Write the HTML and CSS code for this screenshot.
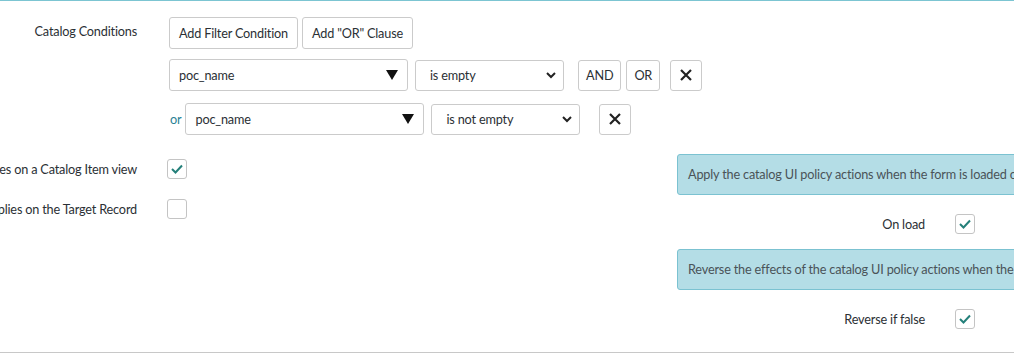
FILE: index.html
```html
<!DOCTYPE html>
<html lang="en">
<head>
    <meta charset="UTF-8">
    <title>Catalog UI Policy</title>
    <link rel="stylesheet" href="styles.css">
</head>
<body>

<div class="form">
    <!-- Conditions -->
    <div class="row conditions">
        <div class="label">Catalog Conditions</div>
        <div class="field">
            <div class="btn-row">
                <button class="btn">Add Filter Condition</button>
                <button class="btn">Add "OR" Clause</button>
            </div>
            <div class="cond">
                <div class="pick field-pick">
                    <span>poc_name</span>
                    <svg width="12" height="10" viewBox="0 0 12 10"><path d="M0 0 H12 L6 10 Z" fill="#111"/></svg>
                </div>
                <div class="pick op-pick">
                    <span>is empty</span>
                    <svg width="10" height="7" viewBox="0 0 10 7"><path d="M1 1 L5 5 L9 1" fill="none" stroke="#222" stroke-width="2"/></svg>
                </div>
                <button class="btn small and">AND</button>
                <button class="btn small">OR</button>
                <button class="btn icon">
                    <svg width="14" height="14" viewBox="0 0 14 14"><path d="M2 2 L12 12 M12 2 L2 12" stroke="#222" stroke-width="2.2"/></svg>
                </button>
            </div>
            <div class="cond">
                <span class="or">or</span>
                <div class="pick field-pick">
                    <span>poc_name</span>
                    <svg width="12" height="10" viewBox="0 0 12 10"><path d="M0 0 H12 L6 10 Z" fill="#111"/></svg>
                </div>
                <div class="pick op-pick">
                    <span>is not empty</span>
                    <svg width="10" height="7" viewBox="0 0 10 7"><path d="M1 1 L5 5 L9 1" fill="none" stroke="#222" stroke-width="2"/></svg>
                </div>
                <button class="btn icon del2">
                    <svg width="14" height="14" viewBox="0 0 14 14"><path d="M2 2 L12 12 M12 2 L2 12" stroke="#222" stroke-width="2.2"/></svg>
                </button>
            </div>
        </div>
    </div>

    <!-- Options -->
    <div class="split">
        <div class="col-left">
            <div class="row check-row">
                <div class="label">Applies on a Catalog Item view</div>
                <div class="field">
                    <span class="checkbox checked">
                        <svg width="14" height="12" viewBox="0 0 14 12"><path d="M2 6 L5.5 9.5 L12 2.5" fill="none" stroke="#24807a" stroke-width="2"/></svg>
                    </span>
                </div>
            </div>
            <div class="row check-row">
                <div class="label">Applies on the Target Record</div>
                <div class="field">
                    <span class="checkbox"></span>
                </div>
            </div>
        </div>

        <div class="col-right">
            <div class="info">Apply the catalog UI policy actions when the form is loaded or when the field values change</div>
            <div class="row right-row load-row">
                <div class="label">On load</div>
                <div class="field">
                    <span class="checkbox checked">
                        <svg width="14" height="12" viewBox="0 0 14 12"><path d="M2 6 L5.5 9.5 L12 2.5" fill="none" stroke="#24807a" stroke-width="2"/></svg>
                    </span>
                </div>
            </div>
            <div class="info">Reverse the effects of the catalog UI policy actions when the conditions evaluate to false</div>
            <div class="row right-row reverse-row">
                <div class="label">Reverse if false</div>
                <div class="field">
                    <span class="checkbox checked">
                        <svg width="14" height="12" viewBox="0 0 14 12"><path d="M2 6 L5.5 9.5 L12 2.5" fill="none" stroke="#24807a" stroke-width="2"/></svg>
                    </span>
                </div>
            </div>
        </div>
    </div>
</div>

</body>
</html>
```

FILE: styles.css
```css
body {
    font-family: "Source Sans Pro", Lato, "Liberation Sans", sans-serif;
    font-size: 12.7px;
    letter-spacing: -0.18px;
    color: #2b3035;
    background-color: white;
    margin: 0;
    padding: 0;
    overflow: hidden;
}

.form {
    border-top: 1px solid #7cc5d2;
    border-bottom: 1px solid #c8c8c8;
    height: 353px;
    box-sizing: border-box;
    width: 1014px;
    overflow: hidden;
}

.row {
    display: flex;
}

.label {
    width: 137px;
    flex-shrink: 0;
    display: flex;
    justify-content: flex-end;
    white-space: nowrap;
    margin-right: 30px;
}

.conditions {
    padding-top: 16px;
}

.conditions .label {
    padding-top: 6px;
}

.btn-row {
    display: flex;
    gap: 4px;
    padding-left: 2px;
    margin-bottom: 10px;
}

.btn {
    font-family: inherit;
    font-size: inherit;
    letter-spacing: inherit;
    color: #2b3035;
    background-color: white;
    border: 1px solid #cbcbcb;
    border-radius: 3px;
    height: 32px;
    padding: 0 9px;
    cursor: pointer;
}

.cond {
    display: flex;
    align-items: center;
    padding-left: 2px;
    margin-bottom: 12px;
}

.pick {
    display: flex;
    align-items: center;
    justify-content: space-between;
    box-sizing: border-box;
    border: 1px solid #cbcbcb;
    border-radius: 3px;
    background-color: white;
    height: 32px;
}

.field-pick {
    width: 239px;
    padding: 0 9px 0 9px;
}

.op-pick {
    width: 149px;
    height: 31px;
    margin-left: 7px;
    padding: 0 7px 0 14px;
}

.btn.small {
    padding: 0 7px;
    height: 31px;
    margin-left: 5px;
}

.btn.and {
    margin-left: 14px;
}

.btn.icon {
    width: 32px;
    height: 31px;
    margin-left: 10px;
    padding: 0;
    display: flex;
    align-items: center;
    justify-content: center;
}

.btn.icon.del2 {
    margin-left: 19px;
}

.or {
    color: #2a7f94;
    margin-left: 1px;
    margin-right: 4px;
}

.split {
    display: flex;
    padding-top: 7px;
}

.col-left {
    width: 677px;
    flex-shrink: 0;
    padding-top: 5px;
}

.check-row {
    align-items: center;
    height: 20px;
    margin-bottom: 20px;
}

.checkbox {
    display: flex;
    align-items: center;
    justify-content: center;
    box-sizing: border-box;
    width: 20px;
    height: 20px;
    border: 1px solid #c4c4c4;
    border-radius: 3px;
    background-color: white;
}

.col-right {
    width: 420px;
    flex-shrink: 0;
}

.info {
    box-sizing: border-box;
    height: 41px;
    line-height: 39px;
    padding-left: 10px;
    white-space: nowrap;
    overflow: hidden;
    background-color: #b4dde6;
    border: 1px solid #7bc2d1;
    border-radius: 3px;
    color: #4a5358;
}

.right-row {
    align-items: center;
    height: 20px;
}

.right-row .label {
    width: 248px;
    margin-right: 30px;
}

.load-row {
    margin-top: 19px;
    margin-bottom: 15px;
}

.reverse-row {
    margin-top: 19px;
}
```
